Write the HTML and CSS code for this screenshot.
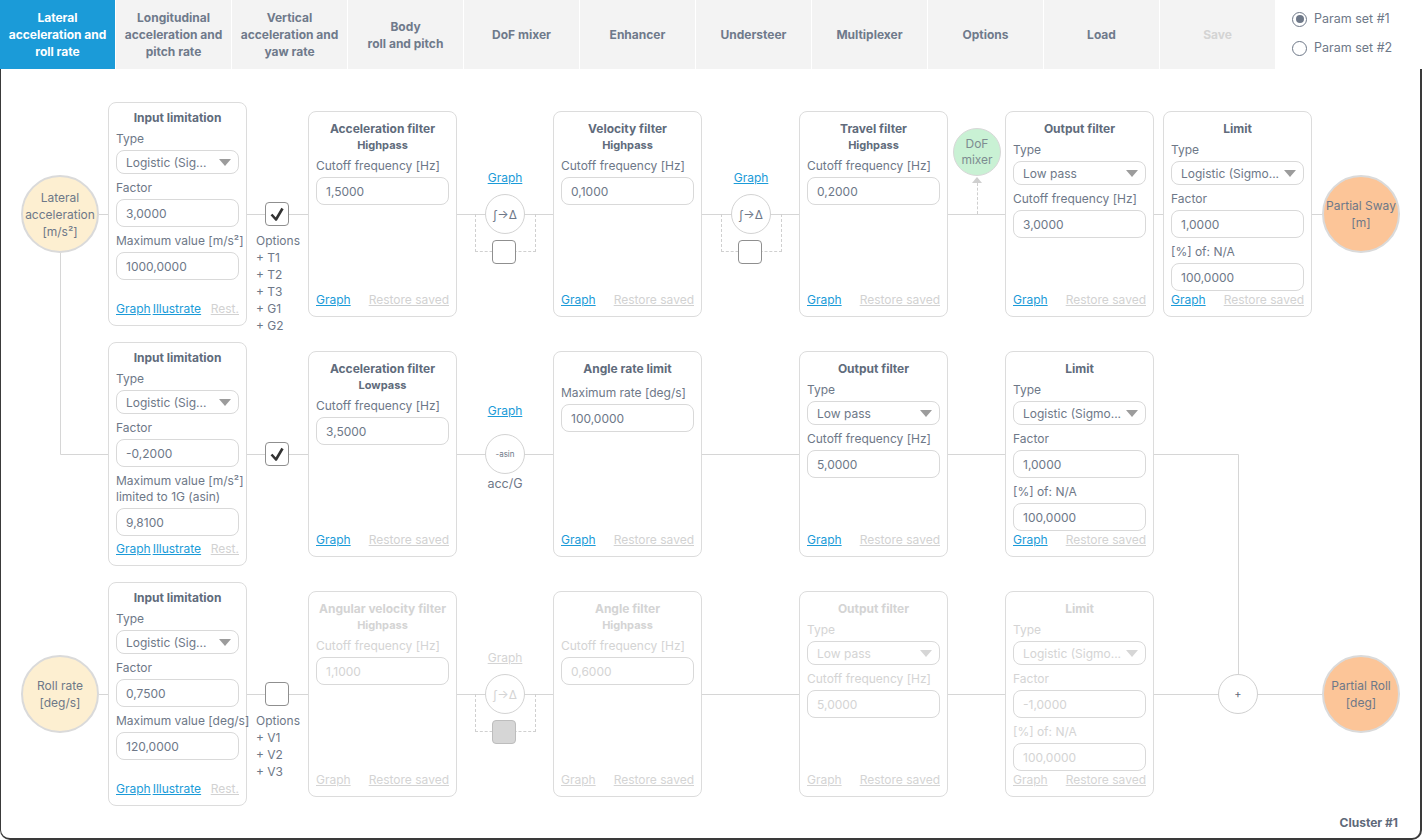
FILE: index.html
```html
<!DOCTYPE html>
<html lang="en">
<head>
  <meta charset="UTF-8">
  <title>Cluster #1</title>
  <link rel="stylesheet" href="styles.css">
</head>
<body>
  <nav class="tabs">
    <a class="tab active">Lateral<br>acceleration and<br>roll rate</a>
    <a class="tab">Longitudinal<br>acceleration and<br>pitch rate</a>
    <a class="tab">Vertical<br>acceleration and<br>yaw rate</a>
    <a class="tab">Body<br>roll and pitch</a>
    <a class="tab">DoF mixer</a>
    <a class="tab">Enhancer</a>
    <a class="tab">Understeer</a>
    <a class="tab">Multiplexer</a>
    <a class="tab">Options</a>
    <a class="tab">Load</a>
    <a class="tab disabled">Save</a>
    <div class="params">
      <label class="radio on"><i></i>Param set #1</label>
      <label class="radio"><i></i>Param set #2</label>
    </div>
  </nav>

  <main class="canvas">
    <svg class="wires" width="1422" height="771">
      <path d="M99 145.5 H1322"/>
      <path d="M60.5 184 V385.5 H108"/>
      <path d="M247 385.5 H1238.5 V605"/>
      <path d="M99 625.5 H1322"/>
    </svg>

    <!-- row 1: lateral acceleration -> sway -->
    <div class="node port in at-src">Lateral<br>acceleration<br>[m/s²]</div>
    <div class="node box il at-il">
      <div class="title">Input limitation</div>
      <div class="label">Type</div>
      <div class="select">Logistic (Sig...</div>
      <div class="label">Factor</div>
      <div class="field">3,0000</div>
      <div class="label">Maximum value [m/s²]</div>
      <div class="field">1000,0000</div>
      <div class="links"><span><a>Graph</a><a>Illustrate</a></span><a class="muted">Rest.</a></div>
    </div>
    <div class="node check on at-chk">
      <svg viewBox="0 0 22 22"><path d="M5.5 11.5 L10 16.5 L16.5 5.5"/></svg>
      <div class="opts">Options<br>+ T1<br>+ T2<br>+ T3<br>+ G1<br>+ G2</div>
    </div>
    <div class="node box at-f1">
      <div class="title">Acceleration filter</div>
      <div class="sub">Highpass</div>
      <div class="label">Cutoff frequency [Hz]</div>
      <div class="field">1,5000</div>
      <div class="links"><a>Graph</a><a class="muted">Restore saved</a></div>
    </div>
    <div class="node op-wrap at-op1">
      <a class="op-graph">Graph</a>
      <div class="bypass"><div class="check small"></div></div>
      <div class="op">∫→Δ</div>
    </div>
    <div class="node box at-f2">
      <div class="title">Velocity filter</div>
      <div class="sub">Highpass</div>
      <div class="label">Cutoff frequency [Hz]</div>
      <div class="field">0,1000</div>
      <div class="links"><a>Graph</a><a class="muted">Restore saved</a></div>
    </div>
    <div class="node op-wrap at-op2">
      <a class="op-graph">Graph</a>
      <div class="bypass"><div class="check small"></div></div>
      <div class="op">∫→Δ</div>
    </div>
    <div class="node box at-f3">
      <div class="title">Travel filter</div>
      <div class="sub">Highpass</div>
      <div class="label">Cutoff frequency [Hz]</div>
      <div class="field">0,2000</div>
      <div class="links"><a>Graph</a><a class="muted">Restore saved</a></div>
    </div>
    <div class="node mix at-mix">
      <div class="mix-ball">DoF<br>mixer</div>
      <i class="mix-arrow"></i>
      <i class="mix-stem"></i>
    </div>
    <div class="node box at-f4">
      <div class="title">Output filter</div>
      <div class="label">Type</div>
      <div class="select">Low pass</div>
      <div class="label">Cutoff frequency [Hz]</div>
      <div class="field">3,0000</div>
      <div class="links"><a>Graph</a><a class="muted">Restore saved</a></div>
    </div>
    <div class="node box at-f5">
      <div class="title">Limit</div>
      <div class="label">Type</div>
      <div class="select">Logistic (Sigmo...</div>
      <div class="label">Factor</div>
      <div class="field">1,0000</div>
      <div class="label">[%] of: N/A</div>
      <div class="field">100,0000</div>
      <div class="links"><a>Graph</a><a class="muted">Restore saved</a></div>
    </div>
    <div class="node port out at-dst">Partial Sway<br>[m]</div>

    <!-- row 2: tilt coordination -->
    <div class="node box il at-il">
      <div class="title">Input limitation</div>
      <div class="label">Type</div>
      <div class="select">Logistic (Sig...</div>
      <div class="label">Factor</div>
      <div class="field">-0,2000</div>
      <div class="label">Maximum value [m/s²]<br>limited to 1G (asin)</div>
      <div class="field">9,8100</div>
      <div class="links"><span><a>Graph</a><a>Illustrate</a></span><a class="muted">Rest.</a></div>
    </div>
    <div class="node check on at-chk">
      <svg viewBox="0 0 22 22"><path d="M5.5 11.5 L10 16.5 L16.5 5.5"/></svg>
    </div>
    <div class="node box at-f1">
      <div class="title">Acceleration filter</div>
      <div class="sub">Lowpass</div>
      <div class="label">Cutoff frequency [Hz]</div>
      <div class="field">3,5000</div>
      <div class="links"><a>Graph</a><a class="muted">Restore saved</a></div>
    </div>
    <div class="node op-wrap at-op1">
      <a class="op-graph high">Graph</a>
      <div class="op asin">-asin</div>
      <div class="op-note">acc/G</div>
    </div>
    <div class="node box at-f2">
      <div class="title">Angle rate limit</div>
      <div class="label wide">Maximum rate [deg/s]</div>
      <div class="field">100,0000</div>
      <div class="links"><a>Graph</a><a class="muted">Restore saved</a></div>
    </div>
    <div class="node box at-f3">
      <div class="title">Output filter</div>
      <div class="label">Type</div>
      <div class="select">Low pass</div>
      <div class="label">Cutoff frequency [Hz]</div>
      <div class="field">5,0000</div>
      <div class="links"><a>Graph</a><a class="muted">Restore saved</a></div>
    </div>
    <div class="node box at-f4">
      <div class="title">Limit</div>
      <div class="label">Type</div>
      <div class="select">Logistic (Sigmo...</div>
      <div class="label">Factor</div>
      <div class="field">1,0000</div>
      <div class="label">[%] of: N/A</div>
      <div class="field">100,0000</div>
      <div class="links"><a>Graph</a><a class="muted">Restore saved</a></div>
    </div>

    <!-- row 3: roll rate -> roll -->
    <div class="node port in at-src">Roll rate<br>[deg/s]</div>
    <div class="node box il at-il">
      <div class="title">Input limitation</div>
      <div class="label">Type</div>
      <div class="select">Logistic (Sig...</div>
      <div class="label">Factor</div>
      <div class="field">0,7500</div>
      <div class="label">Maximum value [deg/s]</div>
      <div class="field">120,0000</div>
      <div class="links"><span><a>Graph</a><a>Illustrate</a></span><a class="muted">Rest.</a></div>
    </div>
    <div class="node check at-chk">
      <div class="opts">Options<br>+ V1<br>+ V2<br>+ V3</div>
    </div>
    <div class="node box off at-f1">
      <div class="title">Angular velocity filter</div>
      <div class="sub">Highpass</div>
      <div class="label">Cutoff frequency [Hz]</div>
      <div class="field">1,1000</div>
      <div class="links"><a>Graph</a><a class="muted">Restore saved</a></div>
    </div>
    <div class="node op-wrap off at-op1">
      <a class="op-graph">Graph</a>
      <div class="bypass"><div class="check small filled"></div></div>
      <div class="op">∫→Δ</div>
    </div>
    <div class="node box off at-f2">
      <div class="title">Angle filter</div>
      <div class="sub">Highpass</div>
      <div class="label">Cutoff frequency [Hz]</div>
      <div class="field">0,6000</div>
      <div class="links"><a>Graph</a><a class="muted">Restore saved</a></div>
    </div>
    <div class="node box off at-f3">
      <div class="title">Output filter</div>
      <div class="label">Type</div>
      <div class="select">Low pass</div>
      <div class="label">Cutoff frequency [Hz]</div>
      <div class="field">5,0000</div>
      <div class="links"><a>Graph</a><a class="muted">Restore saved</a></div>
    </div>
    <div class="node box off at-f4">
      <div class="title">Limit</div>
      <div class="label">Type</div>
      <div class="select">Logistic (Sigmo...</div>
      <div class="label">Factor</div>
      <div class="field">-1,0000</div>
      <div class="label">[%] of: N/A</div>
      <div class="field">100,0000</div>
      <div class="links"><a>Graph</a><a class="muted">Restore saved</a></div>
    </div>
    <div class="node plus at-f5">+</div>
    <div class="node port out at-dst">Partial Roll<br>[deg]</div>

    <div class="cluster">Cluster #1</div>
  </main>
</body>
</html>
```

FILE: styles.css
```css
* { box-sizing: border-box; }
body {
  margin: 0;
  font-family: Inter, "Noto Sans", sans-serif;
  font-size: 12px;
  color: #6e7888;
  background: #fff;
}
a { cursor: pointer; }

/* Top tab bar */
.tabs {
  display: flex;
  gap: 1px;
  height: 69px;
}
.tab {
  flex: none;
  width: 115px;
  display: flex;
  align-items: center;
  justify-content: center;
  text-align: center;
  background: #f3f3f3;
  color: #6f7a8b;
  font-weight: 700;
  line-height: 17px;
}
.tab.active { background: #1b9bd8; color: #fff; }
.tab.disabled { color: #d4d4d4; }
.params {
  display: flex;
  flex-direction: column;
  gap: 11px;
  padding: 10px 0 0 16px;
  font-size: 12.5px;
}
.radio {
  display: flex;
  align-items: center;
  gap: 7px;
  line-height: 18px;
}
.radio i {
  width: 15px;
  height: 15px;
  border: 1.5px solid #6e7888;
  border-radius: 50%;
  display: flex;
  align-items: center;
  justify-content: center;
}
.radio.on i::after {
  content: '';
  width: 8px;
  height: 8px;
  border-radius: 50%;
  background: #6e7888;
}

/* Diagram canvas */
.canvas {
  position: relative;
  height: 771px;
  padding: 25px 0 0 21px;
  display: grid;
  grid-template-columns: 87px 157px 43px 177px 68px 178px 68px 154px 52px 158px 159px 78px;
  grid-template-rows: repeat(3, 240px);
  align-items: center;
  justify-items: start;
}
.canvas::after {
  content: '';
  position: absolute;
  inset: 0;
  border: solid #3a3a3a;
  border-width: 0 2px 2px 1px;
  border-radius: 0 0 10px 10px;
  pointer-events: none;
}
.wires {
  position: absolute;
  left: 0;
  top: 0;
}
.wires path {
  fill: none;
  stroke: #d6d6d6;
  stroke-width: 1;
}
.node { position: relative; }
.at-src { grid-column: 1; }
.at-il { grid-column: 2; }
.at-chk { grid-column: 3; }
.at-f1 { grid-column: 4; }
.at-op1 { grid-column: 5; }
.at-f2 { grid-column: 6; }
.at-op2 { grid-column: 7; }
.at-f3 { grid-column: 8; }
.at-mix { grid-column: 9; }
.at-f4 { grid-column: 10; }
.at-f5 { grid-column: 11; }
.at-dst { grid-column: 12; }

/* Source / destination signals */
.port {
  width: 78px;
  height: 78px;
  border: 2px solid #dadada;
  border-radius: 50%;
  display: flex;
  align-items: center;
  justify-content: center;
  text-align: center;
  line-height: 17px;
}
.port.in { background: #fdefd1; }
.port.out { background: #fcc598; }

/* Processing blocks */
.box {
  width: 149px;
  height: 206px;
  display: flex;
  flex-direction: column;
  padding: 9px 7px 8px;
  border: 1px solid #dcdcdc;
  border-radius: 8px;
  background: #fff;
}
.box.il { width: 139px; height: 224px; padding-top: 7px; }
.title {
  font-weight: 700;
  text-align: center;
  line-height: 16px;
  color: #606b7b;
}
.sub {
  font-weight: 700;
  font-size: 11px;
  text-align: center;
  line-height: 16px;
  color: #606b7b;
}
.label {
  margin-top: 6px;
  line-height: 16px;
  white-space: nowrap;
}
.title + .label, .sub + .label { margin-top: 5px; }
.label.wide { margin-top: 8px; }
.field, .select {
  margin-top: 3px;
  display: flex;
  align-items: center;
  padding: 0 9px;
  border: 1px solid #d9d9d9;
  border-radius: 8px;
  white-space: nowrap;
}
.field { height: 28px; }
.select { height: 24px; position: relative; }
.select::after {
  content: '';
  position: absolute;
  right: 7px;
  top: 8px;
  border-left: 6px solid transparent;
  border-right: 6px solid transparent;
  border-top: 7px solid #9c9c9c;
}
.links {
  margin-top: auto;
  display: flex;
  justify-content: space-between;
  line-height: 16px;
}
.links span { display: flex; gap: 2px; }
.links a, .op-graph { color: #1b9bd8; text-decoration: underline; }
.links a.muted { color: #d2d2d2; }
.off, .off .title, .off .sub, .off .links a, .off .op-graph { color: #d4d4d4; }
.off .select::after { border-top-color: #d6d6d6; }

/* Enable switches */
.check {
  width: 24px;
  height: 24px;
  border: 1px solid #8f8f8f;
  border-radius: 4px;
  background: #fff;
}
.check svg { display: block; width: 22px; height: 22px; }
.check path {
  fill: none;
  stroke: #333;
  stroke-width: 2.6;
  stroke-linejoin: round;
}
.check.filled { background: #d6d6d6; border-color: #bdbdbd; }
.opts {
  position: absolute;
  left: -10px;
  top: 29px;
  line-height: 17px;
  white-space: nowrap;
}

/* Inline operators */
.op-wrap { width: 40px; height: 40px; }
.op {
  position: relative;
  width: 40px;
  height: 40px;
  border: 1px solid #d3d3d3;
  border-radius: 50%;
  background: #fff;
  display: flex;
  align-items: center;
  justify-content: center;
}
.op.asin { font-size: 8px; }
.op-graph {
  position: absolute;
  left: -12px;
  right: -12px;
  top: -24px;
  text-align: center;
  line-height: 16px;
}
.op-graph.high { top: -31px; }
.op-note {
  position: absolute;
  left: -20px;
  right: -20px;
  top: 42px;
  text-align: center;
  line-height: 16px;
  font-size: 12.5px;
}
.bypass {
  position: absolute;
  left: -10px;
  top: 20px;
  width: 61px;
  height: 38px;
  border: 1px dashed #d0d0d0;
  border-top: none;
}
.bypass .check {
  position: absolute;
  left: 16px;
  top: 26px;
}

/* DoF mixer tap */
.mix {
  align-self: start;
  margin-top: 34px;
  width: 48px;
  display: flex;
  flex-direction: column;
  align-items: center;
}
.mix-ball {
  width: 48px;
  height: 48px;
  border: 1.5px solid #d8d8d8;
  border-radius: 50%;
  background: #c9f1d4;
  display: flex;
  align-items: center;
  justify-content: center;
  text-align: center;
  line-height: 16px;
  color: #7d8c90;
}
.mix-arrow {
  margin-top: 1px;
  border-left: 5px solid transparent;
  border-right: 5px solid transparent;
  border-bottom: 6px solid #cfcfcf;
}
.mix-stem {
  height: 31px;
  border-left: 1px dashed #cfcfcf;
}

.plus {
  margin-left: 55px;
  width: 40px;
  height: 40px;
  border: 1px solid #d0d0d0;
  border-radius: 50%;
  background: #fff;
  display: flex;
  align-items: center;
  justify-content: center;
  font-size: 11px;
  color: #5e6979;
}

.cluster {
  position: absolute;
  right: 24px;
  bottom: 10px;
  font-weight: 700;
  color: #5e6979;
}
```
